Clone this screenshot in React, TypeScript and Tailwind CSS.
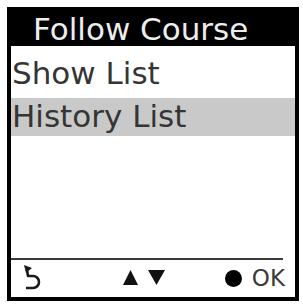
export default function App() {
	return (
		<div className="w-[303px] h-[304px] bg-white pt-[7px] pl-[7px]" style={{ fontFamily: '"DejaVu Sans", sans-serif' }}>
			<div className="w-[292px] h-[294px] border-4 border-black flex flex-col">
				<div className="h-[35px] bg-black text-[#ededed] text-[31px] leading-[37px] pl-[22px] whitespace-nowrap">Follow Course</div>
				<div className="h-[52px] pt-[9px] pl-[1px] text-[31px] leading-[36px] text-[#353535] whitespace-nowrap">Show List</div>
				<div className="h-[38px] bg-[#c9c9c9] pl-[1px] text-[31px] leading-[36px] text-[#353535] whitespace-nowrap">History List</div>
				<div className="flex-1" />
				<div className="h-[2px] bg-[#3a3a3a] mr-[12px]" />
				<div className="h-[37px] flex items-center">
					<svg className="ml-[11px] -mt-[2px]" width="20" height="27" viewBox="0 0 20 27" fill="none">
						<path d="M2 1 L10 4 L4 9 Z" fill="#1a1a1a" />
						<path d="M5 6 L6 12 H11 A5.5 5.5 0 0 1 11 24 H4" stroke="#1a1a1a" strokeWidth="2.6" strokeLinejoin="round" />
					</svg>
					<svg className="ml-[81px] -mt-[3px]" width="44" height="17" viewBox="0 0 44 17">
						<polygon points="0,16 7.5,1 15,16" fill="#111" />
						<polygon points="25,1 42,1 33.5,16" fill="#111" />
					</svg>
					<div className="ml-auto mr-[10px] flex items-center gap-[10px]">
						<div className="w-[17px] h-[17px] rounded-full bg-black" />
						<span className="text-[23px] leading-none text-[#3a3a3a]">OK</span>
					</div>
				</div>
			</div>
		</div>
	)
}
